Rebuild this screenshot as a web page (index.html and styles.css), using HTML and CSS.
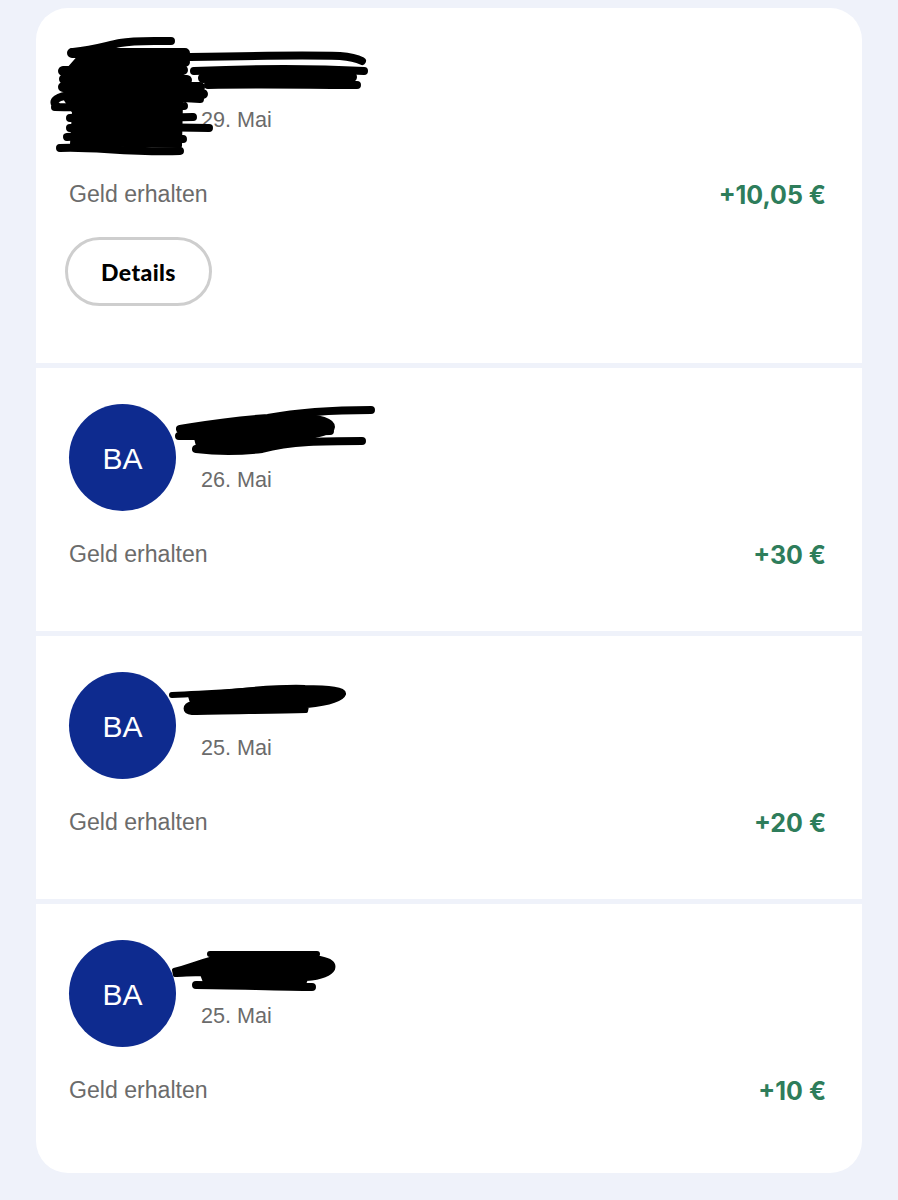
FILE: index.html
```html
<!DOCTYPE html>
<html lang="de">
<head>
<meta charset="utf-8">
<title>Transaktionen</title>
<link rel="stylesheet" href="styles.css">
</head>
<body>
<main class="card">
  <section class="row row-action">
    <div class="head">
      <div class="avatar avatar-hidden"></div>
      <div class="info"><div class="name"></div><div class="date">29. Mai</div></div>
    </div>
    <div class="meta"><span class="label">Geld erhalten</span><span class="amount">+10,05 €</span></div>
    <button class="details">Details</button>
    <svg class="scribble" viewBox="36 8 826 355" aria-hidden="true">
      <path class="s8" d="M73 52 C95 50 105 46 120 43 C135 40 155 41 171 41"/>
      <path class="s10" d="M72 53 L185 53 M82 62 L185 62 M63 71 L183 70 M64 79 L187 80 M63 87 L200 87 M70 93 L203 94"/>
      <path class="s8" d="M57 106 C50 101 58 96 72 95 C100 92 150 97 200 99 M55 107 C90 108 140 106 184 106 M70 118 C110 116 160 118 193 117 M70 128 C120 127 170 127 209 128 M67 137 C100 134 150 140 183 139 M60 148 C90 146 130 153 180 151"/>
      <path class="blob" d="M80 56 L182 56 L180 146 L72 144 L74 112 L66 100 L66 72 Z"/>
      <path class="s8" d="M190 57 C240 56 300 55 340 56 C352 57 358 59 362 61 M194 71 C240 69 310 68 364 71 M208 85 C260 84 310 85 357 85"/>
      <path class="s10" d="M203 78 C250 76 300 75 352 77"/>
    </svg>
  </section>
  <section class="row">
    <div class="head">
      <div class="avatar">BA</div>
      <div class="info"><div class="name"></div><div class="date">26. Mai</div></div>
    </div>
    <div class="meta"><span class="label">Geld erhalten</span><span class="amount">+30 €</span></div>
    <svg class="scribble" viewBox="36 368 826 263" aria-hidden="true">
      <path class="s8" d="M180 429 C205 425 225 421 268 418 C300 412 340 410 371 410 M179 436 C230 437 290 432 330 431 M196 449 C220 452 245 451 262 449 C290 441 325 441 362 441"/>
      <path class="blob" d="M182 431 C210 426 245 421 300 416 C320 416 333 420 333 427 C333 434 310 437 290 441 C265 449 225 449 198 446 L196 438 L180 436 Z"/>
    </svg>
  </section>
  <section class="row">
    <div class="head">
      <div class="avatar">BA</div>
      <div class="info"><div class="name"></div><div class="date">25. Mai</div></div>
    </div>
    <div class="meta"><span class="label">Geld erhalten</span><span class="amount">+20 €</span></div>
    <svg class="scribble" viewBox="36 636 826 263" aria-hidden="true">
      <path class="s6" d="M172 695 C220 693 265 689 303 688"/>
      <path class="blob" d="M190 696 C230 690 280 686 305 687 C330 687 345 689 344 694 C342 700 325 704 307 706 L306 711 C270 712 225 712 192 713 C183 712 184 705 192 703 Z"/>
    </svg>
  </section>
  <section class="row row-last">
    <div class="head">
      <div class="avatar">BA</div>
      <div class="info"><div class="name"></div><div class="date">25. Mai</div></div>
    </div>
    <div class="meta"><span class="label">Geld erhalten</span><span class="amount">+10 €</span></div>
    <svg class="scribble" viewBox="36 904 826 269" aria-hidden="true">
      <path class="s6" d="M210 954 L317 954"/>
      <path class="s8" d="M196 985 C230 985 280 987 312 987"/>
      <path class="blob" d="M174 970 C190 966 195 963 210 959 C250 955 300 955 320 958 C330 960 335 963 333 969 C330 975 318 978 306 979 L304 984 L205 982 L202 974 C192 974 182 975 175 975 Z"/>
    </svg>
  </section>
</main>
</body>
</html>
```
FILE: styles.css
```css
* { box-sizing: border-box; }
html, body { margin: 0; }
body {
  height: 1200px;
  padding: 8px 36px 26px;
  background: #eff2fa;
  font-family: "Liberation Sans", Arial, sans-serif;
  overflow: hidden;
}
.card {
  display: flex;
  flex-direction: column;
  gap: 5px;
  border-radius: 32px;
  overflow: hidden;
}
.row {
  position: relative;
  height: 263px;
  padding: 36px 36px 0 33px;
  background: #fff;
}
.row-action { height: 355px; }
.row-last { height: 269px; }
.head { display: flex; gap: 25px; }
.avatar {
  flex: none;
  display: flex;
  align-items: center;
  justify-content: center;
  width: 107px;
  height: 107px;
  padding-top: 2px;
  border-radius: 50%;
  background: #0e2b8f;
  color: #fff;
  font-size: 30px;
}
.avatar-hidden { background: transparent; }
.name { height: 62px; }
.date {
  color: #6b6b6b;
  font-size: 21.6px;
  line-height: 28px;
}
.meta {
  display: flex;
  justify-content: space-between;
  align-items: center;
  margin-top: 28px;
  height: 30px;
}
.label { color: #6b6b6b; font-size: 23.1px; }
.amount {
  padding-top: 2px;
  color: #2e7d5b;
  font-family: Inter, "Liberation Sans", sans-serif;
  font-size: 25px;
  font-weight: 700;
}
.details {
  display: block;
  width: 147px;
  height: 69px;
  margin: 28px 0 0 -4px;
  border: 3px solid #cecece;
  border-radius: 35px;
  background: #fff;
  color: #000;
  font-family: Lato, sans-serif;
  font-size: 23px;
  font-weight: 900;
  letter-spacing: 0.4px;
}
.scribble {
  position: absolute;
  inset: 0;
  width: 100%;
  height: 100%;
  pointer-events: none;
}
.s6, .s8, .s10, .blob { stroke: #000; stroke-linecap: round; stroke-linejoin: round; }
.s6, .s8, .s10 { fill: none; }
.s6 { stroke-width: 6; }
.s8 { stroke-width: 8; }
.s10 { stroke-width: 10; }
.blob { fill: #000; stroke-width: 4; }
```
